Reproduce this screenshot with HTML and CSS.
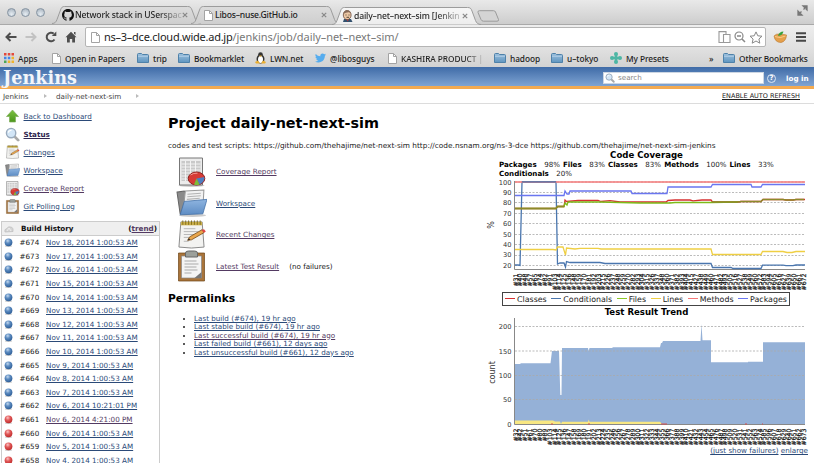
FILE: index.html
```html
<!DOCTYPE html>
<html lang="en">
<head>
<meta charset="utf-8">
<title>daily-net-next-sim [Jenkins]</title>
<link rel="stylesheet" href="styles.css">
</head>
<body>
<svg class="defs" width="0" height="0" aria-hidden="true">
  <defs>
    <linearGradient id="gFolder" x1="0" y1="0" x2="0" y2="1"><stop offset="0" stop-color="#9cc0dd"/><stop offset="1" stop-color="#5f95c0"/></linearGradient>
    <linearGradient id="gOpen" x1="0" y1="0" x2="0" y2="1"><stop offset="0" stop-color="#8fb5e0"/><stop offset="1" stop-color="#5d8cc4"/></linearGradient>
    <linearGradient id="gArrow" x1="0" y1="0" x2="0" y2="1"><stop offset="0" stop-color="#7cc142"/><stop offset="1" stop-color="#4c961c"/></linearGradient>
    <linearGradient id="gTab" x1="0" y1="0" x2="0" y2="1"><stop offset="0" stop-color="#dcdcdc"/><stop offset="1" stop-color="#cfcfcf"/></linearGradient>
    <linearGradient id="gTabOn" x1="0" y1="0" x2="0" y2="1"><stop offset="0" stop-color="#f6f6f6"/><stop offset="1" stop-color="#ededed"/></linearGradient>
    <radialGradient id="gBlue" cx=".4" cy=".3" r=".7"><stop offset="0" stop-color="#c3d8ee"/><stop offset=".45" stop-color="#5c8bc0"/><stop offset="1" stop-color="#2f5f98"/></radialGradient>
    <radialGradient id="gRed" cx=".4" cy=".3" r=".7"><stop offset="0" stop-color="#fbc4c4"/><stop offset=".45" stop-color="#e25a5a"/><stop offset="1" stop-color="#c02c2c"/></radialGradient>
    <symbol id="tab" viewBox="0 0 150 18"><path d="M0 17.5C3 17.5 4 16 5 13.500L8.500 4C9.500 1.200 10.500.500 12.500.500H135.500C138 .500 139 1.200 140 4L143.500 13.500C144.500 16 146 17.500 149 17.500"/></symbol>
    <symbol id="page" viewBox="0 0 9 11"><path d="M.5.500H5.500L8.500 3.500V10.500H.500Z" fill="#fff" stroke="#a3a3a3"/><path d="M5.500.500V3.500H8.500" fill="none" stroke="#a3a3a3"/></symbol>
    <symbol id="folder" viewBox="0 0 12 10"><path d="M.5 9.500V1.500Q.500.500 1.500.500H4.500L5.500 1.500H10.500Q11.500 1.500 11.500 2.500V9.500Z" fill="url(#gFolder)" stroke="#4e81a9"/><path d="M1 3.300H11" stroke="#c0d9ec" stroke-width=".7"/></symbol>
    <symbol id="mag" viewBox="0 0 16 16"><path d="M10 10L14 14" stroke="#a9a9a9" stroke-width="3" stroke-linecap="round"/><circle cx="6.500" cy="6.500" r="5" fill="#d3e6f7" stroke="#9aabbd" stroke-width="1.500"/><path d="M3.500 6Q4 3.500 7 3.500" stroke="#fff" stroke-width="1.200" fill="none"/></symbol>
    <symbol id="report" viewBox="0 0 30 30"><ellipse cx="15" cy="28.500" rx="13" ry="1.500" fill="#ccc"/><path d="M3 1H26V28H3Z" fill="#ececec" stroke="#777"/><path d="M5 4H24V24H5Z" fill="#c9c9c9"/><path d="M5 7H24M5 10H24M5 13H24M5 16H24M5 19H24M5 22H24M9 4V24M14 4V24M19 4V24" stroke="#f6f6f6" stroke-width=".9"/><ellipse cx="20" cy="21.500" rx="8.300" ry="6.500" fill="#d63b36" stroke="#8d1f1c"/><path d="M20 21.500L27.800 20Q28.500 25 23 27.500Z" fill="#4e7fc2"/><path d="M20 21.500L23 27.500Q20 28.500 17.500 27.500Z" fill="#7bbd3a"/><path d="M14 18Q17 15.800 21 16.200" stroke="#f49a95" fill="none"/></symbol>
    <symbol id="ofolder" viewBox="0 0 30 30"><ellipse cx="16" cy="26.500" rx="13" ry="1.500" fill="#ccc"/><path d="M1 4L8 3L10 5V25H4Z" fill="#8b8b8b" stroke="#666"/><path d="M9 3L27 2L26 20L7 22Z" fill="#f2f2f2" stroke="#999"/><path d="M11 6L24 5M11 8.500L24 7.500M10.500 11L23 10" stroke="#b3b3b3"/><path d="M8 13L30 11L26 25L4 26Z" fill="url(#gOpen)" stroke="#3c6ba4" stroke-width=".7"/></symbol>
    <symbol id="notepad" viewBox="0 0 30 30"><path d="M4 2H26L28 28Q15 30 2 28Z" fill="#f3f3f1" stroke="#888"/><path d="M4 2H26V5.500H4Z" fill="#cbb04b"/><path d="M6 .500V5M9 .500V5M12 .500V5M15 .500V5M18 .500V5M21 .500V5M24 .500V5" stroke="#85711f"/><path d="M7 9H19M7 12H22M7 15H19M7 18H13M7 22H12" stroke="#b5b5b5"/><path d="M11 21L13 17.500L26 10L28 13L15 20.500Z" fill="#e9a64c" stroke="#70430f" stroke-width=".8"/><path d="M25.500 10.300L28 9.500L29.800 12L27.800 13.200Z" fill="#e04545"/><path d="M11 21L12.500 18.800L13.500 20.600Z" fill="#222"/></symbol>
    <symbol id="clip" viewBox="0 0 30 32"><path d="M2 3H28V31H2Z" fill="#a9743a" stroke="#6d4517" stroke-width=".7"/><path d="M5 6H25V28H5Z" fill="#f4f4f4" stroke="#888" stroke-width=".7"/><path d="M9 3Q9 1 12 1H18Q21 1 21 3V7H9Z" fill="#9b9f9a" stroke="#666"/><path d="M8 11H20M8 14H22M8 17H20M8 20H21M8 23H15" stroke="#aaa"/><path d="M18 28L25 22V28Z" fill="#777"/></symbol>
    <symbol id="ballBlue" viewBox="0 0 10 10"><ellipse cx="5" cy="9" rx="4" ry="1" fill="#ccc"/><circle cx="5" cy="4.800" r="4.300" fill="url(#gBlue)"/></symbol>
    <symbol id="ballRed" viewBox="0 0 10 10"><ellipse cx="5" cy="9" rx="4" ry="1" fill="#ccc"/><circle cx="5" cy="4.800" r="4.300" fill="url(#gRed)"/></symbol>
  </defs>
</svg>

<div class="tabstrip">
  <div class="lights"><i></i><i></i><i></i></div>
  <div class="tab t1">
    <svg class="shape"><use href="#tab"/></svg>
    <svg class="fav" width="12" height="12" viewBox="0 0 16 16"><path fill="#111" d="M8 0C3.580 0 0 3.580 0 8c0 3.540 2.290 6.530 5.470 7.590.4.070.55-.17.55-.38 0-.19-.01-.82-.01-1.490-2.010.37-2.530-.49-2.690-.94-.09-.23-.48-.94-.82-1.130-.28-.15-.68-.52-.01-.53.63-.01 1.080.58 1.230.82.72 1.210 1.870.87 2.330.66.07-.52.28-.87.51-1.070-1.780-.2-3.640-.89-3.640-3.950 0-.87.31-1.590.82-2.150-.08-.2-.36-1.020.08-2.120 0 0 .67-.21 2.200.82.64-.18 1.320-.27 2-.27s1.360.09 2 .27c1.530-1.040 2.200-.82 2.200-.82.44 1.100.16 1.920.08 2.120.51.56.82 1.270.82 2.150 0 3.070-1.870 3.750-3.650 3.950.29.25.54.73.54 1.480 0 1.070-.01 1.930-.01 2.200 0 .21.15.46.55.38A8.010 8.010 0 0 0 16 8c0-4.420-3.580-8-8-8z"/></svg>
    <span class="fade">Network stack in USerspac</span>
    <svg class="x" viewBox="0 0 6 6"><path d="M.8.800L5.200 5.200M5.200.800L.8 5.200"/></svg>
  </div>
  <div class="tab t2">
    <svg class="shape"><use href="#tab"/></svg>
    <svg class="fav" width="9" height="11"><use href="#page"/></svg>
    <span>Libos–nuse.GitHub.io</span>
    <svg class="x" viewBox="0 0 6 6"><path d="M.8.800L5.200 5.200M5.200.800L.8 5.200"/></svg>
  </div>
  <div class="tab t3">
    <svg class="shape"><use href="#tab"/></svg>
    <svg class="fav" width="11" height="12" viewBox="0 0 11 12"><path d="M1 12L2 9H9L10.500 12Z" fill="#32506e"/><path d="M4 9H6.500L6 11.500Z" fill="#c33"/><ellipse cx="5.200" cy="5" rx="3.900" ry="4.600" fill="#edc8a5" stroke="#6b4a3a" stroke-width=".8"/><path d="M1.300 4Q1.500.600 5 .500T9 3.500L7 2.200Q4 2 1.300 4Z" fill="#876a58"/><path d="M3.500 5H4.500M6.500 5H7.500M4.500 7.300H7" stroke="#543"/></svg>
    <span class="fade">daily–net–next–sim [Jenkin</span>
    <svg class="x" viewBox="0 0 6 6"><path d="M.8.800L5.200 5.200M5.200.800L.8 5.200"/></svg>
  </div>
  <svg class="newtab" width="25" height="12" viewBox="0 0 25 12"><path d="M3.500.700H17.500Q19 .700 19.500 2L22.500 9.500Q23 11.200 21 11.200H7.500Q5.800 11.200 5 9.500L2 2.500Q1.500.700 3.500.700Z" fill="#d4d4d4" stroke="#9b9b9b"/></svg>
  <svg class="full" width="11" height="11" viewBox="0 0 11 11"><path d="M6 1H10V5ZM1 6V10H5ZM6.500 4.500L9 2M2 9L4.500 6.500" fill="#777" stroke="#777" stroke-width="1.300"/></svg>
</div>

<div class="toolbar">
  <svg width="12" height="10" viewBox="0 0 12 10"><path d="M11.500 5H2M5.500 1L1.500 5L5.500 9" fill="none" stroke="#4e4e4e" stroke-width="2"/></svg>
  <svg width="12" height="10" viewBox="0 0 12 10"><path d="M.5 5H10M6.500 1L10.500 5L6.500 9" fill="none" stroke="#c2c2c2" stroke-width="2"/></svg>
  <svg class="reload" width="12" height="12" viewBox="0 0 12 12"><path d="M9.500 8.500A4.300 4.300 0 1 1 8.700 2.600" fill="none" stroke="#4e4e4e" stroke-width="2"/><path d="M6.800 5H11.300V.500Z" fill="#4e4e4e"/></svg>
  <svg class="home" width="12" height="12" viewBox="0 0 12 12"><path d="M6 .800L11.500 6.300H10V11.500H7.200V8H4.800V11.500H2V6.300H.500ZM9 1H10.500V4L9 2.800Z" fill="#4e4e4e"/></svg>
  <div class="omni">
    <svg width="9" height="11"><use href="#page"/></svg>
    <span class="url"><b>ns–3–dce.cloud.wide.ad.jp</b>/jenkins/job/daily–net–next–sim/</span>
    <svg class="oi" width="13" height="12" viewBox="0 0 13 12"><path d="M5 11.500H1V.600H8V3M5.500 3.500H12V11.500H5.500Z" fill="none" stroke="#999" stroke-width="1.100"/></svg>
    <svg class="oi" width="12" height="12" viewBox="0 0 12 12"><circle cx="5" cy="5" r="4" fill="none" stroke="#888" stroke-width="1.200"/><path d="M3 5H7M8 8L11 11" stroke="#888" stroke-width="1.500"/></svg>
    <svg class="oi" width="14" height="13" viewBox="0 0 14 13"><path d="M7 .900L8.800 4.800L13 5.200L9.900 8L10.800 12.200L7 10L3.200 12.200L4.100 8L1 5.200L5.200 4.800Z" fill="none" stroke="#888"/></svg>
  </div>
  <svg class="basket" width="14" height="12" viewBox="0 0 14 12"><path d="M1 5Q3 2.500 7 3T13.500 4Q13 10.500 8 11.500Q2 11.500 1 5Z" fill="#e5a04c" stroke="#b8752a" stroke-width=".6"/><path d="M2 5.500Q7 8 12.500 5" stroke="#f8cc86" fill="none"/><path d="M5 5Q6 .500 10.500.500Q9.500 4.500 5 5Z" fill="#39a13d"/></svg>
  <svg class="menu" width="10" height="10" viewBox="0 0 10 10"><path d="M0 1.200H10M0 5H10M0 8.800H10" stroke="#474747" stroke-width="2"/></svg>
</div>

<div class="bookmarks">
  <div class="bm b1"><svg width="10" height="10" viewBox="0 0 10 10"><path d="M0 0h2.500v2.500H0zM3.800 0h2.500v2.500H3.800zM7.500 0H10v2.500H7.500z" fill="#e4483a"/><path d="M0 3.800h2.500v2.500H0zM3.800 3.800h2.500v2.500H3.800z" fill="#4385e8"/><path d="M7.500 3.800H10v2.500H7.500zM3.800 7.500h2.500V10H3.800zM7.500 7.500H10V10H7.500z" fill="#efb32c"/><path d="M0 7.500h2.500V10H0z" fill="#4ba656"/></svg><span>Apps</span></div>
  <div class="bm b2"><svg width="9" height="11"><use href="#page"/></svg><span>Open in Papers</span></div>
  <div class="bm b3"><svg width="12" height="10"><use href="#folder"/></svg><span>trip</span></div>
  <div class="bm b4"><svg width="12" height="10"><use href="#folder"/></svg><span>Bookmarklet</span></div>
  <div class="bm b5"><svg width="11" height="12" viewBox="0 0 11 12"><ellipse cx="5.500" cy="7" rx="4" ry="4.500" fill="#333"/><circle cx="5.500" cy="2.500" r="2.300" fill="#333"/><ellipse cx="5.500" cy="7.500" rx="2.500" ry="3.500" fill="#fff"/><path d="M4 3.500H7L5.500 5ZM0 10L3 8.500L5 11.500H1ZM11 10L8 8.500L6 11.500H10Z" fill="#e9ae32"/></svg><span>LWN.net</span></div>
  <div class="bm b6"><svg width="11" height="10" viewBox="0 0 24 20"><path fill="#55acee" d="M24 2.400a9.800 9.800 0 0 1-2.800.8A5 5 0 0 0 23.300.500a9.900 9.900 0 0 1-3.100 1.200A4.900 4.900 0 0 0 11.800 6.200 14 14 0 0 1 1.700 1a4.900 4.900 0 0 0 1.500 6.600A4.900 4.900 0 0 1 1 7v.1a4.900 4.900 0 0 0 3.900 4.800 5 5 0 0 1-2.200.1 4.900 4.900 0 0 0 4.600 3.400A9.900 9.900 0 0 1 0 17.500 14 14 0 0 0 7.500 19.700c9.100 0 14.300-7.700 14-14.600A10 10 0 0 0 24 2.400z"/></svg><span>@libosguys</span></div>
  <div class="bm b7"><svg width="9" height="11"><use href="#page"/></svg><span class="fade">KASHIRA PRODUCT |</span></div>
  <div class="bm b8"><svg width="12" height="10"><use href="#folder"/></svg><span>hadoop</span></div>
  <div class="bm b9"><svg width="12" height="10"><use href="#folder"/></svg><span>u–tokyo</span></div>
  <div class="bm b10"><svg width="12" height="12" viewBox="0 0 12 12"><path d="M6 2V10M2 6H10" stroke="#4db6a4" stroke-width="2.600"/><circle cx="6" cy="2" r="2" fill="#4db6a4"/><circle cx="6" cy="10" r="2" fill="#4db6a4"/><circle cx="2" cy="6" r="2" fill="#4db6a4"/><circle cx="10" cy="6" r="2" fill="#4db6a4"/></svg><span>My Presets</span></div>
  <div class="bm b11"><span>»</span></div>
  <div class="bm b12"><svg width="12" height="10"><use href="#folder"/></svg><span>Other Bookmarks</span></div>
</div>

<header class="jhead">
  <div class="brand">Jenkins</div>
  <div class="search"><svg width="10" height="10"><use href="#mag"/></svg><span>search</span></div>
  <div class="help">?</div>
  <a class="login">log in</a>
</header>
<nav class="crumbs"><span class="c1">Jenkins</span><i></i><span class="c2">daily-net-next-sim</span><i></i><a class="auto">ENABLE AUTO REFRESH</a></nav>

<div class="content">
  <aside class="side">
    <ul class="tasks">
      <li><svg width="14" height="14" viewBox="0 0 14 14"><path d="M7 1L13 7.500H10V13H4V7.500H1Z" fill="url(#gArrow)" stroke="#7fae5c" stroke-width=".7"/></svg><a>Back to Dashboard</a></li>
      <li><svg width="15" height="15"><use href="#mag"/></svg><a class="cur">Status</a></li>
      <li><svg width="14" height="14"><use href="#notepad"/></svg><a>Changes</a></li>
      <li><svg width="15" height="15"><use href="#ofolder"/></svg><a>Workspace</a></li>
      <li><svg width="15" height="15"><use href="#report"/></svg><a class="seen">Coverage Report</a></li>
      <li><svg width="15" height="15"><use href="#clip"/></svg><a>Git Polling Log</a></li>
    </ul>
    <section class="history">
      <div class="hhead"><svg width="10" height="8" viewBox="0 0 10 8"><path d="M1 7Q0 4 3 3.500Q4 1 6.500 2Q9.500 2 9 6.500Z" fill="#d5d5d5" stroke="#bbb" stroke-width=".7"/><path d="M3 6L5 3L7 6" stroke="#eee" fill="none"/></svg><b>Build History</b><b class="trend">(<a>trend</a>)</b></div>
      <ul class="builds" id="builds"></ul>
    </section>
  </aside>
  <main class="main">
    <h1>Project daily-net-next-sim</h1>
    <p class="desc">codes and test scripts: https://github.com/thehajime/net-next-sim http://code.nsnam.org/ns-3-dce https://github.com/thehajime/net-next-sim-jenkins</p>
    <div class="cols">
      <div class="left">
        <ul class="links">
          <li><svg width="30" height="30"><use href="#report"/></svg><a class="seen">Coverage Report</a></li>
          <li><svg width="31" height="31"><use href="#ofolder"/></svg><a>Workspace</a></li>
          <li><svg width="29" height="29"><use href="#notepad"/></svg><a class="seen">Recent Changes</a></li>
          <li><svg width="28" height="32"><use href="#clip"/></svg><a class="seen">Latest Test Result</a><span>(no failures)</span></li>
        </ul>
        <h2>Permalinks</h2>
        <ul class="perma">
          <li><a>Last build (#674), 19 hr ago</a></li>
          <li><a>Last stable build (#674), 19 hr ago</a></li>
          <li><a class="seen">Last successful build (#674), 19 hr ago</a></li>
          <li><a>Last failed build (#661), 12 days ago</a></li>
          <li><a>Last unsuccessful build (#661), 12 days ago</a></li>
        </ul>
      </div>
      <div class="charts">
        <h3 class="cov">Code Coverage</h3>
        <p class="stats"><b>Packages</b><i>98%</i><b>Files</b><i>83%</i><b>Classes</b><i>83%</i><b>Methods</b><i>100%</i><b>Lines</b><i>33%</i><br><b>Conditionals</b><i>20%</i></p>
        <svg class="plot" width="330" height="113" viewBox="484 178 330 113">
          <g class="grid"><path d="M515 182H805M515 192.500H805M515 202.500H805M515 213.500H805M515 223.500H805M515 234.500H805M515 244.500H805M515 255.500H805M515 265.500H805"/></g>
          <g class="axis"><path d="M514.500 181V269.500H805"/></g>
          <g class="tick" text-anchor="end"><text x="511.500" y="184.600">100</text><text x="511.500" y="195">90</text><text x="511.500" y="205.300">80</text><text x="511.500" y="215.800">70</text><text x="511.500" y="226.200">60</text><text x="511.500" y="236.600">50</text><text x="511.500" y="247">40</text><text x="511.500" y="257.400">30</text><text x="511.500" y="267.800">20</text></g>
          <text class="ylab" text-anchor="middle" transform="translate(494 225) rotate(-90)">%</text>
          <g class="lines">
            <path stroke="#4a76ae" d="M515 265H518L520 265.500L522 182H556L557.500 264L560 263H564L565.500 267L566.500 261.500L570 262.500H600L605 263.500H711L712.500 267.500H731L733 268.500H761L762.500 265.200H783L786 265.700H793L796 265H805"/>
            <path stroke="#d62f2f" d="M515 208.500H556L557.500 206.500H564L565 200L566.500 201.500L578 200.500H598L601 201.500L610 200.700L620 202H666L668 200.500L675 200H690L693 200.800L702 200H711L712.500 202H738L741 201.500H761L763 199.500H783L786 200H793L796 199.500H805"/>
            <path stroke="#7dbb18" d="M515 208.500H556L557.500 206.500H564L565 203L567 205L568 202H600L620 202.500L640 203H670L675 202.500H711L738 202"/>
            <path stroke="#8c8a2a" d="M515 208.500H556L557.500 206.500H564M712 202H738L741 201.500H761L763 199.500H783L786 200H793L796 199.500H804"/>
            <path stroke="#efcf43" d="M515 249.500H553L556 250L557.500 247H563L565.500 255L566.500 248L575 249L580 248.300H598L601 249H711L712.500 254.500H761L762.500 251.500H783L787 252.500H792L796 251.500H805"/>
            <path stroke="#f57878" d="M515 182H805"/>
            <path stroke="#6a76f0" d="M515 195.500H564L565 191L567 194H569L570 191H631L632 193.500H667L668 187H711L712.500 184.500H751L752 187H761L762.500 184.500H805"/>
            <path stroke="#4a76ae" d="M522 181.900H556"/>
          </g>
          <g class="xl" id="x1"></g>
        </svg>
        <div class="legend"><span class="k1">Classes</span><span class="k2">Conditionals</span><span class="k3">Files</span><span class="k4">Lines</span><span class="k5">Methods</span><span class="k6">Packages</span></div>
        <h3 class="res">Test Result Trend</h3>
        <svg class="plot" width="330" height="128" viewBox="484 317 330 128">
          <path fill="#95b1d7" d="M515 423V363H520L521 362.300H550.500L552 350H559L560.300 394H561.500L562 347H588L588.700 350L589.500 347H612L613 346.300H660L661 342H662L663 340H700.500L701.500 323L702.500 339.300H711V361.300H748V360.700H763V341.200H805V423Z"/>
          <path fill="#f8e782" d="M515 423V419.500H553L555 420.500H560L561 423L562 420.700H588L588.700 418.500L589.500 420.700H660L662 423Z"/>
          <g class="grid"><path d="M515 325.500H805M515 350H805M515 374.500H805M515 398.500H805"/></g>
          <g class="axis"><path d="M514.500 317V423.500H805"/></g>
          <path d="M551 423H553M588 423H590M661 423H667M745 423H747M762 423H763" stroke="#d84a4a"/>
          <g class="tick" text-anchor="end"><text x="511.500" y="328">200</text><text x="511.500" y="352.500">150</text><text x="511.500" y="377">100</text><text x="511.500" y="401.300">50</text><text x="511.500" y="426">0</text></g>
          <text class="ylab" text-anchor="middle" transform="translate(494.500 371.500) rotate(-90)">count</text>
          <g class="xl" id="x2"></g>
        </svg>
        <p class="under"><a>(just show failures)</a> <a>enlarge</a></p>
      </div>
    </div>
  </main>
</div>
<script src="page.js"></script>
</body>
</html>
```
FILE: styles.css
```css
* { box-sizing: border-box; }
html, body { height: 463px; overflow: hidden; }
body { margin: 0; background: #fff; font: 7.200px/9px "DejaVu Sans", sans-serif; color: #222; }
ul { list-style: none; margin: 0; padding: 0; }
h1, h2, h3, p { margin: 0; }
svg { flex: none; display: block; }
.defs { position: absolute; }

.tabstrip { height: 25px; display: flex; align-items: flex-end; background: linear-gradient(#e9e9e9, #cdcdcd); border-bottom: 1px solid #a9a9a9; font-family: "Noto Sans", sans-serif; font-size: 8.600px; font-weight: 500; letter-spacing: -.12px; color: #222; position: relative; }
.lights { display: flex; gap: 5.500px; padding: 0 0 7px 6.500px; width: 52px; }
.lights i { width: 9px; height: 9px; border-radius: 50%; border: 1px solid #8593a1; background: radial-gradient(circle at 50% 75%, #e6edf3, #a3afbb); }
.tab { position: relative; width: 150px; height: 18px; margin-right: -11px; display: flex; align-items: center; padding-left: 10px; line-height: 18px; white-space: nowrap; }
.shape { position: absolute; left: 0; top: 0; width: 150px; height: 18px; fill: url(#gTab); stroke: #9c9c9c; }
.tab > :not(.shape) { position: relative; }
.t2 { margin-right: -9px; }
.t3 { z-index: 1; margin-bottom: -1px; }
.t3 .shape { fill: url(#gTabOn); }
.fav { margin-right: 1px; }
.t2 .fav { margin: 0 2px 0 3px; }
.tab .x { position: absolute; left: 130px; top: 6px; width: 6px; height: 6px; stroke: #888; stroke-width: 1.200; }
.t2 span { letter-spacing: -.2px; }
.t3 span { letter-spacing: -.17px; }
.fade { background: linear-gradient(90deg, #222 78%, #bbb); -webkit-background-clip: text; background-clip: text; color: transparent; }
.newtab { margin: 0 0 2px 5px; }
.full { margin: 0 6px 8px auto; }

.toolbar { height: 24px; display: flex; align-items: center; background: linear-gradient(#eeeeee, #e0e0e0); padding: 0 7px 0 5px; }
.toolbar > svg + svg { margin-left: 8px; }
.omni { margin-left: 8px; width: 681px; height: 20px; border: 1px solid #b5b5b5; border-radius: 2px; background: #fff; display: flex; align-items: center; padding: 0 2px 0 5px; margin-right: 7px; }
.url { flex: 1; margin-left: 4px; font: 11px/18px "Noto Sans", sans-serif; color: #777; white-space: nowrap; letter-spacing: -.06px; }
.url b { font-weight: 400; color: #222; letter-spacing: -.25px; }
.oi { margin-left: 3px; }
.toolbar .menu { margin-left: 9px; }
.toolbar .basket { margin-left: 0; }

.bookmarks { height: 18px; display: grid; grid-template-columns: 48px 85px 41px 77px 60px 73px 106px 57px 59px 99px 14px 1fr; align-items: center; background: linear-gradient(#e0e0e0, #d2d2d2); padding-left: 4px; font: 500 8.300px/17px "Noto Sans", sans-serif; letter-spacing: -.05px; color: #1c1c1c; white-space: nowrap; }
.bm { display: flex; align-items: center; gap: 4px; }
.b4, .b5, .b12 { letter-spacing: -.1px; }

.jhead { height: 22px; display: flex; align-items: center; background: linear-gradient(#3f6ba7, #7fa4d3); border-bottom: 3px solid #f3aa51; color: #fff; }
.brand { width: 603px; padding-left: 3px; font: bold 17.600px/19px "DejaVu Serif", "Liberation Serif", serif; color: #f3f6fa; padding-top: 1px; }
.search { width: 161px; height: 12px; background: #fff; display: flex; align-items: center; gap: 3px; padding-left: 1px; color: #888; font-size: 7.200px; margin-top: 2px; border: 1px solid #cdd6e2; }
.help { margin: 3px 0 0 3px; width: 9px; height: 9px; border-radius: 50%; border: 1px solid #dce6f3; font-weight: bold; line-height: 7.500px; font-size: 7px; text-align: center; }
.login { font-weight: bold; margin: 3px 0 0 10px; }

.crumbs { height: 15px; display: flex; align-items: center; border-bottom: 1px solid #dcdcdc; padding: 0 14px 0 3px; color: #444; }
.crumbs i { border-left: 3px solid #bbb; border-top: 2px solid transparent; border-bottom: 2px solid transparent; }
.c1 { width: 41px; }
.c2 { margin-left: 9px; width: 80px; }
.auto { margin-left: auto; text-decoration: underline; color: #222; font-size: 6.500px; }

.content { display: flex; height: 359px; }
.side { width: 160px; padding: 3px 0 0 1px; }
a { text-decoration: underline; color: #2b4a78; text-decoration-thickness: .8px; text-underline-offset: 1px; white-space: nowrap; }
.seen, .cur, .trend a { color: #533a62; }
.login { text-decoration: none; color: #fff; }
.tasks li { height: 18px; display: flex; align-items: center; padding-left: 4px; gap: 3.500px; }
.tasks svg { width: 15px; }
.cur { font-weight: bold; color: #30264f; }
.history { margin-top: 6px; border: 1px solid #ccc; width: 159px; height: 260px; overflow: hidden; }
.hhead { height: 14px; background: #efefef; border-bottom: 1px solid #ccc; display: flex; align-items: center; padding: 0 2px; gap: 7px; color: #111; }
.trend { margin-left: auto; }
.builds li { height: 13.600px; display: flex; align-items: center; padding-left: 2px; }
.builds span { width: 26.500px; margin-left: 6.500px; color: #222; }

.main { flex: 1; padding-left: 8px; }
h1 { font-size: 14.360px; line-height: 18px; padding-top: 10px; color: #000; }
.desc { font-size: 7.350px; margin-top: 9px; white-space: nowrap; }
.cols { display: flex; }
.left { width: 316px; padding-top: 6px; }
.links li { height: 31.500px; display: flex; align-items: center; padding-left: 8px; }
.links svg { width: 31px; }
.links a { margin-left: 9px; }
.links span { margin-left: 10px; }
h2 { font-size: 10.700px; line-height: 13px; margin-top: 10px; color: #000; }
.perma { list-style: disc; margin-top: 9.500px; padding-left: 26px; line-height: 8.500px; }
.perma li { height: 8.500px; }
.charts { width: 330px; }
h3 { font-size: 8.600px; line-height: 10px; color: #000; text-align: center; }
.cov { width: 325px; }
.stats { height: 18px; padding-left: 15px; line-height: 9px; white-space: nowrap; font-size: 7.100px; }
.stats i { font-style: normal; margin: 0 3px 0 7.500px; }
.stats b { color: #000; }
.grid path { stroke: #aaa; stroke-width: .8; stroke-dasharray: 2 1.500; }
.axis path { stroke: #888; fill: none; }
.tick { font-size: 6.700px; fill: #333; }
.ylab { font-size: 8px; fill: #333; }
.lines path { fill: none; stroke-width: 1.300; }
.xl { font-size: 6.200px; fill: #111; stroke: #111; stroke-width: .2px; }
.legend { margin: 1px 0 0 18px; width: 288px; height: 14px; border: 1px solid #444; display: flex; align-items: center; justify-content: space-between; padding: 0 2px; font-size: 7.900px; }
.legend span::before { content: ""; display: inline-block; width: 10px; height: 1.300px; margin-right: 2px; vertical-align: 2.500px; background: var(--c); }
.k1 { --c: #d62f2f; } .k2 { --c: #4a76ae; } .k3 { --c: #8bc926; } .k4 { --c: #efcf43; } .k5 { --c: #f57878; } .k6 { --c: #6a76f0; }
.res { margin-top: 1px; height: 11px; width: 325px; }
.under { text-align: right; padding-right: 6px; line-height: 10px; font-size: 7.200px; }
```
FILE: page.js
```js
const builds = [
  [674, "Nov 18, 2014 1:00:53 AM"], [673, "Nov 17, 2014 1:00:53 AM"], [672, "Nov 16, 2014 1:00:53 AM"],
  [671, "Nov 15, 2014 1:00:53 AM"], [670, "Nov 14, 2014 1:00:53 AM"], [669, "Nov 13, 2014 1:00:53 AM"],
  [668, "Nov 12, 2014 1:00:53 AM"], [667, "Nov 11, 2014 1:00:53 AM"], [666, "Nov 10, 2014 1:00:53 AM"],
  [665, "Nov 9, 2014 1:00:53 AM"], [664, "Nov 8, 2014 1:00:53 AM"], [663, "Nov 7, 2014 1:00:53 AM"],
  [662, "Nov 6, 2014 10:21:01 PM"], [661, "Nov 6, 2014 4:21:00 PM"], [660, "Nov 6, 2014 1:00:53 AM"],
  [659, "Nov 5, 2014 1:00:53 AM"], [658, "Nov 4, 2014 1:00:53 AM"]
];
document.getElementById("builds").innerHTML = builds.map(([n, d]) =>
  `<li><svg width="9" height="9"><use href="#${n > 661 ? "ballBlue" : "ballRed"}"/></svg><span>#${n}</span><a${n === 661 ? ' class="seen"' : ""}>${d}</a></li>`).join("");

function labels(id, y, first, last, short, count) {
  const step = 288 / (count - 1);
  let out = "";
  for (let i = 0; i < count; i++) {
    const n = i < short ? Math.round(first + i * (99 - first) / short) : Math.round(103 + (i - short) * (last - 103) / (count - 1 - short));
    out += `<text text-anchor="end" transform="translate(${(517.5 + i * step).toFixed(1)} ${y}) rotate(-90)">#${n}</text>`;
  }
  document.getElementById(id).innerHTML = out;
}
labels("x1", 273.5, 31, 672, 8, 60);
labels("x2", 427.5, 32, 673, 7, 60);
```
